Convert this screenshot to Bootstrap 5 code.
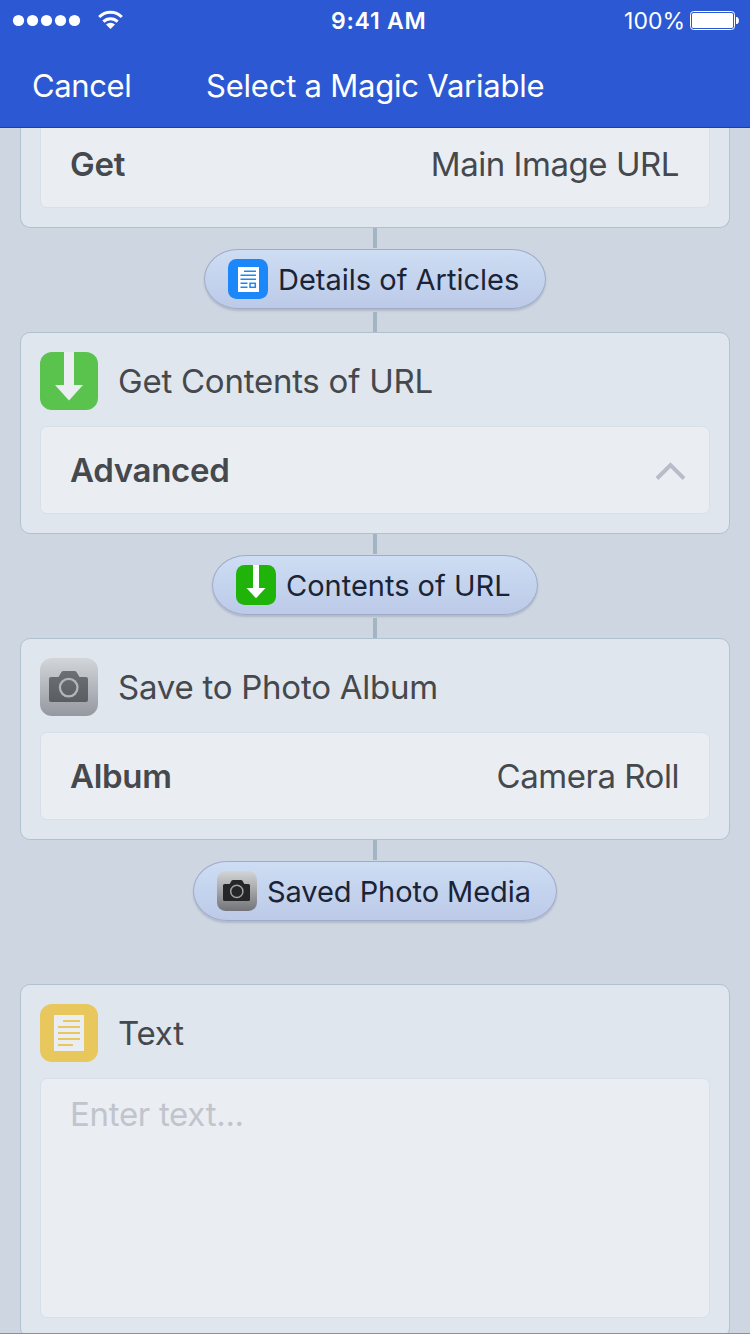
<!DOCTYPE html>
<html lang="en">
<head>
<meta charset="utf-8">
<meta name="viewport" content="width=device-width, initial-scale=1">
<title>Select a Magic Variable</title>
<link href="https://cdn.jsdelivr.net/npm/bootstrap@5.3.0/dist/css/bootstrap.min.css" rel="stylesheet">
<style>
  body { font-family: Inter, "Liberation Sans", sans-serif; font-size: 33px; line-height: 1; color: #45484d; background: #ced6e1; height: 1334px; }
  .screen { width: 750px; height: 1334px; }
  .topbar { height: 128px; background: #2c58d4; border-bottom: 1px solid #213f94; flex: none; }
  .status-row { height: 41px; font-size: 23px; }
  .status-row .t { padding-top: 2px; }
  .clock { margin-left: 201px; letter-spacing: .75px; }
  .charge { margin-right: 5px; }
  .title-row { height: 86px; font-size: 31px; letter-spacing: -.22px; padding-top: 2px; }
  .side { width: 206px; padding-left: 32px; letter-spacing: -.4px; }
  .step { margin: 0 20px; padding: 19px; background: #dfe6ee; border: 1px solid #b0c2d0; border-radius: 10px; flex: none; }
  .step-first { border-top: 0; border-radius: 0 0 10px 10px; padding-top: 0; }
  .step-icon { width: 58px; height: 58px; flex: none; }
  .step-name { margin-left: 20px; letter-spacing: -.24px; }
  .slot { height: 88px; margin-top: 16px; padding: 0 30px 0 29px; background: #eaeef3; border: 1px solid #d7dfe9; border-radius: 7px; letter-spacing: -.3px; }
  .slot-first { height: 80px; margin-top: 0; padding-bottom: 6px; border-top: 0; border-radius: 0 0 7px 7px; }
  .slot-value { letter-spacing: -.46px; }
  .slot-text { height: 240px; padding-top: 19px; color: #c1c4cc; }
  .stem { width: 4px; height: 20px; background: #a3b5c2; flex: none; }
  .pill { height: 60px; margin: 1px 0 3px; padding-left: 23px; gap: 10px; font-size: 29px; color: #1a2436; background: linear-gradient(#cdddf3, #bccae8); border: 1px solid #a0abc8; border-radius: 34px / 30px; box-shadow: 0 2px 2px rgba(70, 85, 115, .22); }
  .pill .t { padding-top: 1px; }
  .pill svg { width: 40px; height: 40px; flex: none; }
  .pill-details { width: 342px; }
  .pill-contents { width: 326px; }
  .pill-saved { width: 364px; letter-spacing: -.06px; }
  .chevron { margin: 2px -6px 0 0; }
  .step-last { margin-top: 60px; }
  .bottom-line { bottom: 0; height: 1px; background: #8d9196; }
  .t { white-space: nowrap; }
</style>
</head>
<body class="m-0 overflow-hidden">
<div class="screen position-relative d-flex flex-column overflow-hidden">
  <header class="topbar text-white">
    <div class="status-row d-flex align-items-center">
      <svg width="130" height="41" viewBox="0 0 130 41" fill="#fff">
        <circle cx="18.5" cy="20.5" r="5.6"/><circle cx="32.5" cy="20.5" r="5.6"/><circle cx="46.5" cy="20.5" r="5.6"/><circle cx="60.5" cy="20.5" r="5.6"/><circle cx="74.5" cy="20.5" r="5.6"/>
        <path d="M110.5 29l-4.500-4.500a6.400 6.400 0 0 1 9 0z"/>
        <path d="M103.400 21.600a10 10 0 0 1 14.200 0M99.200 17a16 16 0 0 1 22.600 0" fill="none" stroke="#fff" stroke-width="3"/>
      </svg>
      <span class="clock t fw-semibold">9:41 AM</span>
      <span class="charge t ms-auto">100%</span>
      <svg width="60" height="41" viewBox="0 0 60 41"><rect x="0.5" y="11.5" width="44" height="18" rx="3" fill="none" stroke="#fff"/><rect x="2" y="13" width="41" height="15" rx="1.5" fill="#fff"/><path d="M46 17h1.200q1.800 1 1.800 3.500T47.200 24H46z" fill="#fff"/></svg>
    </div>
    <div class="title-row d-flex align-items-center">
      <span class="side t">Cancel</span>
      <span class="t">Select a Magic Variable</span>
    </div>
  </header>
  <main class="d-flex flex-column flex-grow-1">
    <section class="step step-first">
      <div class="slot slot-first d-flex align-items-center justify-content-between"><strong class="t fw-semibold">Get</strong><span class="slot-value t">Main Image URL</span></div>
    </section>
    <div class="d-flex flex-column align-items-center">
      <div class="stem"></div>
      <div class="pill pill-details d-flex align-items-center">
        <svg viewBox="0 0 40 40"><rect width="40" height="40" rx="8.500" fill="#1b87f8"/><path d="M10 8h21v25H10z" fill="#fff"/><path d="M16 12.200h12M12.500 16.200H28M12.500 20.300H28M12.500 24.300h7M12.500 28.300h7" stroke="#1b87f8" stroke-width="1.600"/><rect x="22" y="24.300" width="5.300" height="4" fill="none" stroke="#1b87f8" stroke-width="1.500"/></svg>
        <span class="t">Details of Articles</span>
      </div>
      <div class="stem"></div>
    </div>
    <section class="step">
      <div class="d-flex align-items-center">
        <svg class="step-icon" viewBox="0 0 58 58"><rect width="58" height="58" rx="12" fill="#59c34e"/><path d="M24 0h10v33h9L29 48.500 15 33h9z" fill="#eaeef3"/></svg>
        <span class="step-name t">Get Contents of URL</span>
      </div>
      <div class="slot d-flex align-items-center justify-content-between"><strong class="t fw-semibold">Advanced</strong>
        <svg class="chevron" width="30" height="20" viewBox="0 0 30 20"><path d="M2 17.500L15.500 4 29 17.500" fill="none" stroke="#b9bcc8" stroke-width="4"/></svg></div>
    </section>
    <div class="d-flex flex-column align-items-center">
      <div class="stem"></div>
      <div class="pill pill-contents d-flex align-items-center">
        <svg viewBox="0 0 40 40"><rect width="40" height="40" rx="8.500" fill="#20b40a"/><path d="M17 0h6v23h6.500L20 33.200 10.500 23H17z" fill="#fff"/></svg>
        <span class="t">Contents of URL</span>
      </div>
      <div class="stem"></div>
    </div>
    <section class="step">
      <div class="d-flex align-items-center">
        <svg class="step-icon" viewBox="0 0 58 58"><defs><linearGradient id="silver" x2="0" y2="1"><stop stop-color="#d2d5d9"/><stop offset="1" stop-color="#9598a0"/></linearGradient><linearGradient id="camera" x2="0" y2="1"><stop stop-color="#6c6f73"/><stop offset="1" stop-color="#5a5d61"/></linearGradient></defs><rect width="58" height="58" rx="12" fill="url(#silver)"/><path d="M11 19h7.500l3-5q.8-1 2-1h11q1.200 0 2 1l3 5H46q2 0 2 2v21q0 2-2 2H11q-2 0-2-2V21q0-2 2-2z" fill="url(#camera)"/><circle cx="28.700" cy="29.600" r="8.800" fill="none" stroke="#b2b5b9" stroke-width="2.300"/></svg>
        <span class="step-name t">Save to Photo Album</span>
      </div>
      <div class="slot d-flex align-items-center justify-content-between"><strong class="t fw-semibold">Album</strong><span class="slot-value t">Camera Roll</span></div>
    </section>
    <div class="d-flex flex-column align-items-center">
      <div class="stem"></div>
      <div class="pill pill-saved d-flex align-items-center">
        <svg viewBox="0 0 40 40"><defs><linearGradient id="steel" x2="0" y2="1"><stop stop-color="#d2d4d6"/><stop offset="1" stop-color="#737478"/></linearGradient></defs><rect width="40" height="40" rx="8.500" fill="url(#steel)"/><path d="M7.500 13h5.200l2-3.400q.5-.6 1.300-.6h8q.8 0 1.300.6l2 3.400h4.200Q33 13 33 14.500v14q0 1.500-1.500 1.500h-24Q6 30 6 28.500v-14Q6 13 7.500 13z" fill="#252628"/><circle cx="19.800" cy="20.400" r="6.100" fill="none" stroke="#a0a2a5" stroke-width="1.500"/></svg>
        <span class="t">Saved Photo Media</span>
      </div>
    </div>
    <section class="step step-last">
      <div class="d-flex align-items-center">
        <svg class="step-icon" viewBox="0 0 58 58"><rect width="58" height="58" rx="12" fill="#e8c75c"/><path d="M14 11h30v36H14z" fill="#eaeef3"/><path d="M23 17h17M18 23h22M18 29h22M18 35h22M18 41h15" stroke="#e8c75c" stroke-width="2"/></svg>
        <span class="step-name t">Text</span>
      </div>
      <div class="slot slot-text"><span class="t">Enter text...</span></div>
    </section>
  </main>
  <div class="bottom-line position-absolute start-0 w-100"></div>
</div>
<script src="https://cdn.jsdelivr.net/npm/bootstrap@5.3.0/dist/js/bootstrap.bundle.min.js"></script>
</body>
</html>
